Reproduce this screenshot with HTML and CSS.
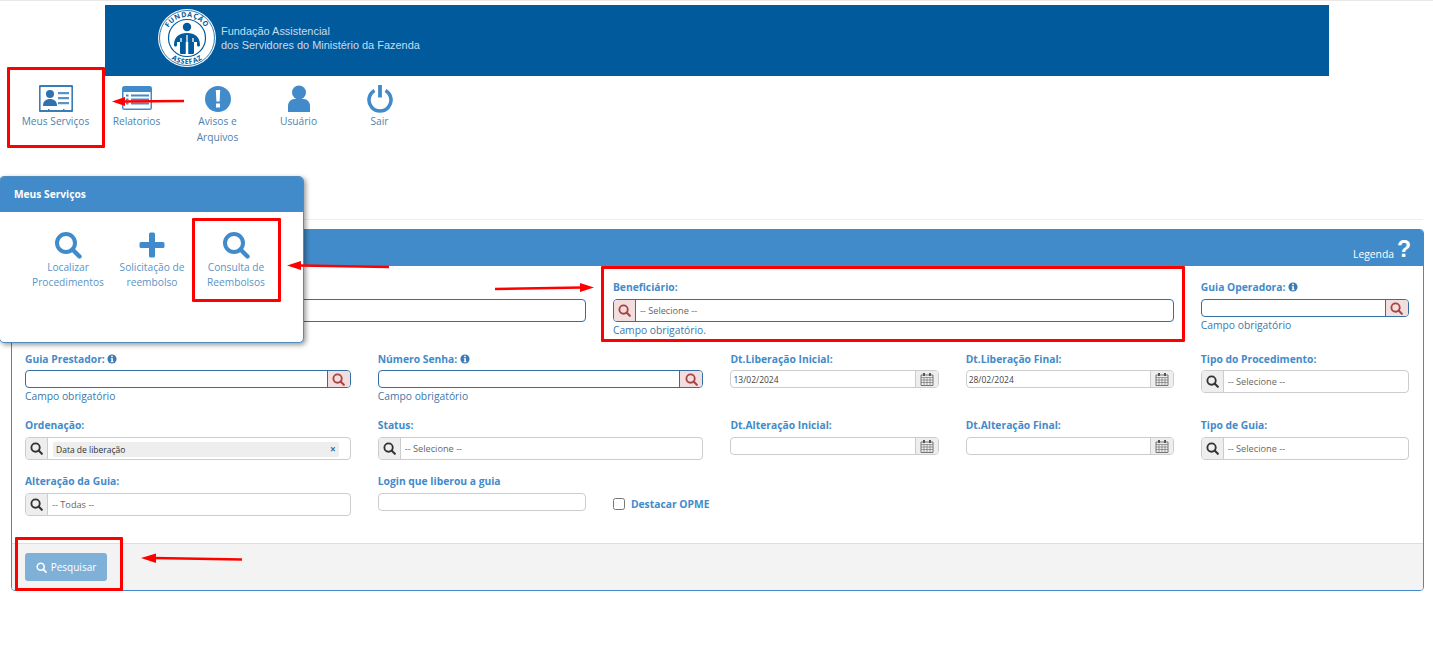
FILE: index.html
```html
<!DOCTYPE html>
<html lang="pt-BR">
<head>
<meta charset="UTF-8">
<title>Consulta de Reembolsos</title>
<meta name="viewport" content="width=device-width, initial-scale=1.0">
<link rel="stylesheet" href="styles.css">
</head>
<body>
<svg class="icon-defs" width="0" height="0" aria-hidden="true">
    <symbol id="i-search" viewBox="0 0 28 28">
        <circle cx="12" cy="12" r="9" fill="none" stroke="currentColor" stroke-width="4"/>
        <path d="M18.5 18.5L25.5 25.5" fill="none" stroke="currentColor" stroke-width="4.4" stroke-linecap="round"/>
    </symbol>
    <symbol id="i-info" viewBox="0 0 12 12">
        <circle cx="6" cy="6" r="5.5" fill="currentColor"/>
        <path d="M5 2.2h2v1.7H5zM4.5 5h2.6v3.6h.7V10H4.4V8.6h.8V6.3h-.7z" fill="#fff"/>
    </symbol>
    <symbol id="i-calendar" viewBox="0 0 14 14">
        <path d="M1 3h12v10.500H1z" fill="#eee" stroke="#666" stroke-width=".9"/>
        <path d="M1 5.500h12M1 8h12M1 10.500h12M4 5.500v8M7 5.500v8M10 5.500v8" stroke="#777" stroke-width=".7"/>
        <path d="M3 1h2v3H3zM9 1h2v3H9z" fill="#555"/>
    </symbol>
</svg>

<header class="top">
    <div class="banner">
        <svg class="logo" width="60" height="60" viewBox="0 0 60 60">
            <circle cx="30" cy="30" r="29" fill="#fff"/>
            <circle cx="30" cy="30" r="27.500" fill="none" stroke="#005a9c" stroke-width=".8"/>
            <circle cx="30" cy="30" r="18.500" fill="#fff" stroke="#005a9c" stroke-width="1.200"/>
            <defs>
                <path id="arc-top" d="M9 30a21 21 0 0 1 42 0"/>
                <path id="arc-bottom" d="M4 30a26 26 0 0 0 52 0"/>
            </defs>
            <text class="logo-ring"><textPath href="#arc-top" startOffset="50%" text-anchor="middle">FUNDAÇÃO</textPath></text>
            <text class="logo-ring logo-ring-b"><textPath href="#arc-bottom" startOffset="50%" text-anchor="middle">ASSEFAZ</textPath></text>
            <circle cx="30" cy="19" r="4.200" fill="#005a9c"/>
            <path d="M17 37c0-8 5-12 13-12s13 4 13 12c0 2-3 2-3 0v-3h-3v10.500c0 2-2.500 2-2.500 0V34h-9v10.500c0 2-2.500 2-2.500 0V34h-3v3c0 2-3 2-3 0z" fill="#005a9c"/>
            <path d="M26.500 28v18M33.500 28v18" stroke="#005a9c" stroke-width="4.500"/>
            <path d="M30 27v20M24 30v4M36 30v4" stroke="#fff" stroke-width="1.300"/>
        </svg>
        <p class="banner-text">Fundação Assistencial<br>dos Servidores do Ministério da Fazenda</p>
    </div>
</header>

<nav class="mainnav">
    <a class="navitem">
        <svg class="navicon" width="34" height="28" viewBox="0 0 34 28">
            <path d="M2 1h30a1.500 1.500 0 0 1 1.500 1.500v22a1.500 1.500 0 0 1-1.500 1.500H2A1.500 1.500 0 0 1 .5 24.500v-22A1.500 1.500 0 0 1 2 1z" fill="none" stroke="#3a7cb5" stroke-width="2.200"/>
            <circle cx="11" cy="9" r="4" fill="#2f72ad"/>
            <path d="M4 21c0-5 3-7 7-7s7 2 7 7z" fill="#2f72ad"/>
            <path d="M19 7h11v2.200H19zM19 12h11v2.200H19zM19 17h11v2.200H19z" fill="#5b93c4"/>
            <path d="M9 24h1.500v3H9zM24 24h1.500v3H24z" fill="#3a7cb5"/>
        </svg>
        <span>Meus Serviços</span>
    </a>
    <a class="navitem">
        <svg class="navicon" width="30" height="28" viewBox="0 0 30 28">
            <rect y="1" width="30" height="24" rx="2.500" fill="#428bca"/>
            <path d="M1.500 7h27v16.500h-27z" fill="#fff"/>
            <path d="M9 9.500h18v2H9zM9 13.500h18v2H9zM9 17.500h18v2H9zM4 9.500h2.500v2H4zM4 13.500h2.500v2H4zM4 17.500h2.500v2H4z" fill="#428bca"/>
        </svg>
        <span>Relatorios</span>
    </a>
    <a class="navitem">
        <svg class="navicon" width="26" height="28" viewBox="0 0 26 28">
            <circle cx="13" cy="14" r="13" fill="#428bca"/>
            <path d="M10.800 5h4.400l-.6 11.500h-3.200zM11 18.500h4v4h-4z" fill="#fff"/>
        </svg>
        <span>Avisos e Arquivos</span>
    </a>
    <a class="navitem">
        <svg class="navicon" width="22" height="28" viewBox="0 0 22 28">
            <circle cx="11" cy="7.500" r="7" fill="#428bca"/>
            <path d="M0 27v-6c0-4 3-7 6-7h10c3 0 6 3 6 7v6z" fill="#428bca"/>
        </svg>
        <span>Usuário</span>
    </a>
    <a class="navitem">
        <svg class="navicon" width="26" height="28" viewBox="0 0 26 28">
            <path d="M7.500 5.500a11 11 0 1 0 11 0" fill="none" stroke="#428bca" stroke-width="3.600"/>
            <path d="M13 0v12.500" stroke="#428bca" stroke-width="3.800"/>
        </svg>
        <span>Sair</span>
    </a>
</nav>

<hr class="rule">

<main class="panel">
    <div class="panel-head">
        <span>Legenda</span>
        <b class="help">?</b>
    </div>
    <form class="panel-body">
        <div class="field span-5">
            <label>&nbsp;</label>
            <div class="group required tall"><div class="control"></div></div>
        </div>
        <div class="field span-5">
            <label>Beneficiário:</label>
            <div class="group required tall">
                <span class="addon danger"><svg width="13" height="13"><use href="#i-search"/></svg></span>
                <div class="control placeholder">-- Selecione --</div>
            </div>
            <small>Campo obrigatório.</small>
        </div>
        <div class="field span-2">
            <label>Guia Operadora: <svg class="info" width="10" height="10"><use href="#i-info"/></svg></label>
            <div class="group required">
                <div class="control"></div>
                <span class="addon danger"><svg width="13" height="13"><use href="#i-search"/></svg></span>
            </div>
            <small class="near">Campo obrigatório</small>
        </div>

        <div class="field span-3 row2">
            <label>Guia Prestador: <svg class="info" width="10" height="10"><use href="#i-info"/></svg></label>
            <div class="group required">
                <div class="control"></div>
                <span class="addon danger"><svg width="13" height="13"><use href="#i-search"/></svg></span>
            </div>
            <small class="near">Campo obrigatório</small>
        </div>
        <div class="field span-3 row2">
            <label>Número Senha: <svg class="info" width="10" height="10"><use href="#i-info"/></svg></label>
            <div class="group required">
                <div class="control"></div>
                <span class="addon danger"><svg width="13" height="13"><use href="#i-search"/></svg></span>
            </div>
            <small class="near">Campo obrigatório</small>
        </div>
        <div class="field span-2 row2">
            <label>Dt.Liberação Inicial:</label>
            <div class="group">
                <div class="control date">13/02/2024</div>
                <span class="addon"><svg width="14" height="14"><use href="#i-calendar"/></svg></span>
            </div>
        </div>
        <div class="field span-2 row2">
            <label>Dt.Liberação Final:</label>
            <div class="group">
                <div class="control date">28/02/2024</div>
                <span class="addon"><svg width="14" height="14"><use href="#i-calendar"/></svg></span>
            </div>
        </div>
        <div class="field span-2 row2">
            <label>Tipo do Procedimento:</label>
            <div class="group tall">
                <span class="addon"><svg width="13" height="13"><use href="#i-search"/></svg></span>
                <div class="control placeholder">-- Selecione --</div>
            </div>
        </div>

        <div class="field span-3">
            <label>Ordenação:</label>
            <div class="group tall">
                <span class="addon"><svg width="13" height="13"><use href="#i-search"/></svg></span>
                <div class="control">
                    <span class="chip">Data de liberação <i>×</i></span>
                </div>
            </div>
        </div>
        <div class="field span-3">
            <label>Status:</label>
            <div class="group tall">
                <span class="addon"><svg width="13" height="13"><use href="#i-search"/></svg></span>
                <div class="control placeholder">-- Selecione --</div>
            </div>
        </div>
        <div class="field span-2">
            <label>Dt.Alteração Inicial:</label>
            <div class="group">
                <div class="control date"></div>
                <span class="addon"><svg width="14" height="14"><use href="#i-calendar"/></svg></span>
            </div>
        </div>
        <div class="field span-2">
            <label>Dt.Alteração Final:</label>
            <div class="group">
                <div class="control date"></div>
                <span class="addon"><svg width="14" height="14"><use href="#i-calendar"/></svg></span>
            </div>
        </div>
        <div class="field span-2">
            <label>Tipo de Guia:</label>
            <div class="group tall">
                <span class="addon"><svg width="13" height="13"><use href="#i-search"/></svg></span>
                <div class="control placeholder">-- Selecione --</div>
            </div>
        </div>

        <div class="field span-3">
            <label>Alteração da Guia:</label>
            <div class="group tall">
                <span class="addon"><svg width="13" height="13"><use href="#i-search"/></svg></span>
                <div class="control placeholder">-- Todas --</div>
            </div>
        </div>
        <div class="field span-2">
            <label>Login que liberou a guia</label>
            <div class="group"><div class="control"></div></div>
        </div>
        <div class="field span-7 check">
            <span class="checkbox"></span>
            <label>Destacar OPME</label>
        </div>
    </form>
    <div class="panel-foot">
        <button class="btn" type="button">
            <svg width="11" height="11"><use href="#i-search"/></svg>
            Pesquisar
        </button>
    </div>
</main>

<!-- janela aberta por cima do painel -->
<section class="popup">
    <div class="popup-head">Meus Serviços</div>
    <div class="popup-body">
        <a class="popitem">
            <svg width="28" height="28"><use href="#i-search"/></svg>
            <span>Localizar Procedimentos</span>
        </a>
        <a class="popitem">
            <svg width="28" height="28" viewBox="0 0 28 28"><path d="M11 3a1.500 1.500 0 0 1 1.500-1.500h3A1.500 1.500 0 0 1 17 3v8h8a1.500 1.500 0 0 1 1.500 1.500v3A1.500 1.500 0 0 1 25 17h-8v8a1.500 1.500 0 0 1-1.500 1.500h-3A1.500 1.500 0 0 1 11 25v-8H3a1.500 1.500 0 0 1-1.500-1.500v-3A1.500 1.500 0 0 1 3 11h8z" fill="currentColor"/></svg>
            <span>Solicitação de reembolso</span>
        </a>
        <a class="popitem">
            <svg width="28" height="28"><use href="#i-search"/></svg>
            <span>Consulta de Reembolsos</span>
        </a>
    </div>
</section>

<!-- marcacoes vermelhas do tutorial -->
<div class="mark mark-nav"></div>
<div class="mark mark-pop"></div>
<div class="mark mark-ben"></div>
<div class="mark mark-btn"></div>
<svg class="arrows" width="1433" height="645" viewBox="0 0 1433 645">
    <path d="M184 101L124 101.500" class="arrow-line"/>
    <path d="M112 101.500L125 97V106z" class="arrow-head"/>
    <path d="M389 267L300 265.500" class="arrow-line"/>
    <path d="M287 265.500L301 261V270z" class="arrow-head"/>
    <path d="M495 289L582 287.500" class="arrow-line"/>
    <path d="M594 287.500L580 283V292z" class="arrow-head"/>
    <path d="M242 559.500L153 558" class="arrow-line"/>
    <path d="M141 558L156 553.500V563z" class="arrow-head"/>
</svg>
</body>
</html>
```

FILE: styles.css
```css
* {
    box-sizing: border-box;
}

html, body {
    height: 645px;
    overflow: hidden;
}

body {
    font-family: "Open Sans", "Noto Sans", sans-serif;
    font-size: 11px;
    color: #333;
    background-color: #fff;
    margin: 0;
    padding: 0;
    position: relative;
}

.icon-defs {
    position: absolute;
}

.top {
    border-top: 1px solid #e8e8e8;
    padding: 4px 0 0 105px;
}

.banner {
    width: 1224px;
    height: 71px;
    background-color: #005a9c;
    display: flex;
    align-items: center;
    padding-left: 52px;
    gap: 4px;
}

.logo {
    flex: none;
    margin-top: -5px;
}

.logo-ring {
    font-size: 7px;
    font-weight: 700;
    fill: #005a9c;
    letter-spacing: .6px;
}

.logo-ring-b {
    font-size: 7px;
}

.banner-text {
    margin: -5px 0 0;
    color: #c9dcec;
    font-family: "Liberation Sans", Arial, sans-serif;
    font-size: 10.950px;
    line-height: 14.500px;
}

.mainnav {
    display: flex;
    padding: 9px 0 0 15px;
    height: 143px;
}

.navitem {
    width: 81px;
    display: flex;
    flex-direction: column;
    align-items: center;
    text-align: center;
    color: #4f7fae;
    font-size: 10.200px;
    line-height: 16px;
}

.navicon {
    height: 28px;
    flex: none;
}

.rule {
    margin: 0 10px 9px 12px;
    border: 0;
    border-top: 1px solid #eee;
}

.panel {
    margin: 0 9px 0 11px;
    height: 362px;
    border: 1px solid #428bca;
    border-radius: 4px;
    overflow: hidden;
    display: flex;
    flex-direction: column;
}

.panel-head {
    height: 36px;
    flex: none;
    background-color: #428bca;
    color: #fff;
    display: flex;
    justify-content: flex-end;
    align-items: flex-end;
    padding: 0 12px 4px 0;
    gap: 3px;
    font-size: 10.300px;
}

.panel-head span {
    line-height: 16px;
}

.help {
    font-size: 23px;
    line-height: 24px;
    height: 24px;
    margin-bottom: 1px;
    font-family: "Liberation Sans", Arial, sans-serif;
}

.panel-body {
    flex: 1;
    display: grid;
    grid-template-columns: repeat(12, 90.583px);
    grid-template-rows: 72px 66px 56px 56px;
    column-gap: 27px;
    padding: 13px 0 0 13px;
    margin: 0;
}

.span-2 { grid-column: span 2; }
.span-3 { grid-column: span 3; }
.span-5 { grid-column: span 5; }
.span-7 { grid-column: span 7; }

.field label {
    display: block;
    font-weight: 700;
    color: #428bca;
    font-size: 10.300px;
    line-height: 16px;
    margin-bottom: 4px;
}

.field.row2 label {
    margin-bottom: 3px;
}

.field .info {
    color: #3b7ab2;
    vertical-align: -1px;
}

.group {
    display: flex;
    height: 18px;
    border: 1px solid #ccc;
    border-radius: 4px;
    background-color: #fff;
    overflow: hidden;
}

.group.tall {
    height: 23px;
}

.group.required {
    border-color: #336fa5;
}

.control {
    flex: 1;
    min-width: 0;
    display: flex;
    align-items: center;
    font-size: 8.500px;
    color: #444;
    padding: 0 2px;
}

.control.placeholder {
    padding-left: 4px;
    font-size: 9.200px;
    color: #666;
}

.addon {
    flex: none;
    width: 23px;
    display: flex;
    align-items: center;
    justify-content: center;
    background-color: #eee;
    border-left: 1px solid #ccc;
    color: #333;
}

.addon:first-child {
    width: 22px;
    border-left: 0;
    border-right: 1px solid #ccc;
}

.addon.danger {
    background-color: #f2dede;
    color: #a94442;
    border-color: #336fa5;
}

.chip {
    flex: 1;
    display: flex;
    justify-content: space-between;
    align-items: center;
    height: 15px;
    margin: 1px 9px 0 3px;
    padding: 0 3px;
    border-radius: 2px;
    background-color: #eee;
    font-size: 8.500px;
    color: #333;
}

.chip i {
    font-style: normal;
    font-weight: 700;
    font-size: 10px;
    color: #3b6f9f;
}

.field small {
    display: block;
    color: #3b78ad;
    font-size: 10.300px;
    line-height: 14px;
    margin-top: 1px;
}

.check {
    display: flex;
    align-items: flex-start;
    gap: 6px;
    padding-top: 23px;
}

.check label {
    font-size: 10.300px;
    margin: 0;
}

.checkbox {
    width: 12px;
    height: 12px;
    margin-top: 2px;
    border: 1px solid #767676;
    border-radius: 2.500px;
}

.panel-foot {
    height: 47px;
    flex: none;
    background-color: #f3f3f3;
    border-top: 1px solid #ddd;
    padding: 9px 13px;
}

.btn {
    display: flex;
    align-items: center;
    gap: 4px;
    height: 28px;
    width: 82px;
    justify-content: center;
    font: inherit;
    font-size: 10px;
    color: #fff;
    background-color: #7fb0d8;
    border: 0;
    border-radius: 3px;
}

.popup {
    position: absolute;
    left: -1px;
    top: 176px;
    width: 305px;
    height: 167px;
    background-color: #fff;
    border: 1px solid #4f8cc0;
    border-radius: 5px;
    box-shadow: 2px 2px 5px rgba(0, 0, 0, .4);
    overflow: hidden;
}

.popup-head {
    height: 35px;
    padding-left: 14px;
    background-color: #428bca;
    color: #fff;
    font-weight: 700;
    font-size: 10.200px;
    line-height: 35px;
}

.popup-body {
    display: flex;
    padding: 19px 0 0 26px;
}

.popitem {
    width: 84px;
    display: flex;
    flex-direction: column;
    align-items: center;
    text-align: center;
    color: #5a93c6;
    font-size: 10.200px;
    line-height: 15px;
    gap: 1px;
}

.popitem svg {
    color: #428bca;
    flex: none;
}

.mark {
    position: absolute;
    border: 3px solid #f00;
    border-radius: 1px;
}

.mark-nav { left: 7px; top: 67px; width: 98px; height: 81px; }
.mark-pop { left: 192px; top: 218px; width: 89px; height: 84px; }
.mark-ben { left: 601px; top: 266px; width: 584px; height: 76px; }
.mark-btn { left: 15px; top: 537px; width: 108px; height: 54px; }

.arrows {
    position: absolute;
    left: 0;
    top: 0;
    pointer-events: none;
}

.arrow-line {
    fill: none;
    stroke: #f00;
    stroke-width: 2.500;
}

.arrow-head {
    fill: #f00;
}
```
